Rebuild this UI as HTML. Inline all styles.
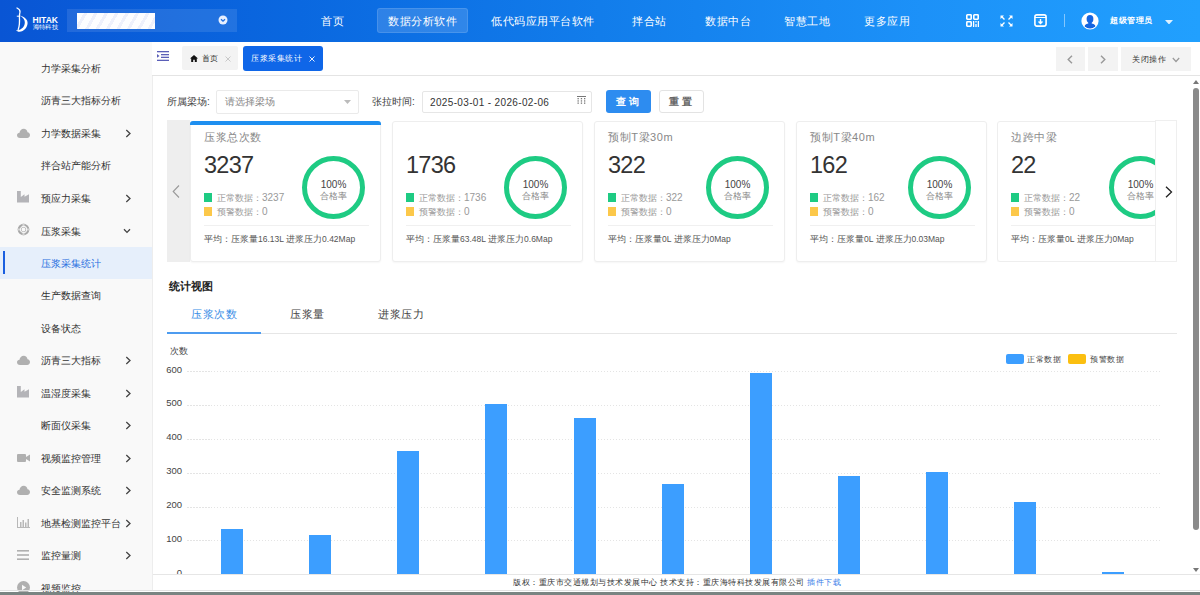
<!DOCTYPE html>
<html><head><meta charset="utf-8">
<style>
*{box-sizing:border-box;margin:0;padding:0}
html,body{width:1200px;height:595px;overflow:hidden;background:#fff;font-family:"Liberation Sans",sans-serif;color:#333}
div,span{position:absolute;white-space:nowrap}
#hdr{left:0;top:0;width:1200px;height:42px;background:linear-gradient(90deg,rgb(9,85,212) 0%,rgb(10,104,224) 25%,rgb(18,125,235) 50%,rgb(28,145,248) 76.7%,rgb(33,160,254) 100%)}
.nav{top:0;height:42px;line-height:42px;color:#fff;font-size:11px;letter-spacing:0.55px}
#side{left:0;top:42px;width:153px;height:548px;background:#f9f9f9;border-right:1px solid #ededed}
.si{left:0;width:152px;height:32px;line-height:32px;font-size:10px;color:#333}
.si .t{left:41px;top:1px}
.si .ar{left:124px;top:0}
.si svg{position:absolute;left:17px}
.si svg.chv{left:124.5px;top:11.5px}
#tabs{left:152px;top:42px;width:1048px;height:34px;background:#fff;border-bottom:1px solid #e4e4e4}
.card{top:121px;width:191px;height:141px;background:#fff;border:1px solid #eeeeee;border-radius:3px;box-shadow:0 1px 2px rgba(0,0,0,0.04)}
.ct{left:13px;top:8px;font-size:11px;letter-spacing:0.6px;color:#888}
.cn{left:13px;top:30px;font-size:23.5px;letter-spacing:-0.7px;color:#333}
.lg{left:13px;font-size:9px;color:#999}
.lg b{font-weight:normal;font-size:10px}
.lg i{display:inline-block;width:8px;height:9px;vertical-align:-1px;margin-right:5px}
.ring{left:111px;top:34px;width:63px;height:63px;border-radius:50%;border:5px solid #1ecb83}
.ring .p{left:0;width:53px;top:18px;text-align:center;font-size:10px;color:#444}
.ring .q{left:0;width:53px;top:30px;text-align:center;font-size:8.5px;color:#888}
.sep{left:13px;width:165px;top:103px;height:1px;background:#f0f0f0}
.avg{left:13px;top:112px;font-size:8.5px;color:#555}
.yl{left:150px;width:32px;text-align:right;font-size:9.5px;color:#444;line-height:10px}
.gl{left:187px;width:973px;height:1px;background:repeating-linear-gradient(90deg,#e4e4e4 0,#e4e4e4 1.5px,transparent 1.5px,transparent 3px)}
.bar{width:22px;background:#3c9eff}
</style></head><body>
<!-- HEADER -->
<div id="hdr">
  <svg style="position:absolute;left:14px;top:7px" width="48" height="27" viewBox="0 0 48 27">
    <path d="M3 1 C5 2 6.2 3.5 6 5 C5.8 6.5 5.2 8 5.4 10 M5.4 9.5 C5.7 14 5.6 19 4.2 22.5" fill="none" stroke="#fff" stroke-width="1.3" stroke-linecap="round"/>
    <path d="M2.8 9.2 H6.3" stroke="#fff" stroke-width="1"/>
    <path d="M5.8 8.5 C10.5 10 13.8 12.5 13.6 16 C13.4 20.5 10 24.5 5.5 24.8 C4 24.9 2.8 24 2.2 23 C4.5 23.5 7 22.5 9 20.5 C10.8 18.5 11.2 15.5 10.5 13.5 C9.5 11 7.5 9.5 5.8 8.5 Z" fill="#fff"/>
    <text x="18.5" y="15.6" font-family="Liberation Sans" font-weight="bold" font-size="8.6" fill="#fff" transform="scale(1,1)" textLength="25.5" lengthAdjust="spacingAndGlyphs">HITAK</text>
    <text x="18.5" y="21.8" font-size="5.5" fill="#fff" textLength="25.5" lengthAdjust="spacingAndGlyphs">海特科技</text>
  </svg>
  <div style="left:67px;top:9px;width:170px;height:23px;background:rgba(255,255,255,0.1)"></div>
  <div style="left:77px;top:13px;width:78px;height:16px;background:repeating-linear-gradient(120deg,#fdfdff 0,#fdfdff 6px,#eef0fb 6px,#eef0fb 9px)"></div>
  <svg style="position:absolute;left:218px;top:15px" width="10" height="10" viewBox="0 0 10 10"><circle cx="5" cy="5" r="4.5" fill="#e8f0ff"/><path d="M3 4.2 L5 6.2 L7 4.2" fill="none" stroke="#1f6fe0" stroke-width="1.3"/></svg>

  <div class="nav" style="left:321px">首页</div>
  <div style="left:377px;top:8px;width:91px;height:25px;border-radius:3px;background:rgba(255,255,255,0.14);border:1px solid rgba(255,255,255,0.12)"></div>
  <div class="nav" style="left:388px">数据分析软件</div>
  <div class="nav" style="left:491px">低代码应用平台软件</div>
  <div class="nav" style="left:632px">拌合站</div>
  <div class="nav" style="left:705px">数据中台</div>
  <div class="nav" style="left:784px">智慧工地</div>
  <div class="nav" style="left:864px">更多应用</div>

  <!-- qr -->
  <svg style="position:absolute;left:966px;top:14px" width="13" height="13" viewBox="0 0 13 13" fill="none" stroke="#fff" stroke-width="1.6">
    <rect x="0.8" y="0.8" width="4.4" height="4.4" rx="0.6"/><rect x="7.8" y="0.8" width="4.4" height="4.4" rx="0.6"/><rect x="0.8" y="7.8" width="4.4" height="4.4" rx="0.6"/>
    <path d="M7.6 7 V13 M12.4 7 V13 M10 7 V8.5 M10 10 V13" stroke-width="1.3"/>
  </svg>
  <!-- fullscreen -->
  <svg style="position:absolute;left:1000px;top:15px" width="13" height="12" viewBox="0 0 13 12" fill="#fff">
    <path d="M0.5 0.5 H4 L0.5 4 Z M12.5 0.5 H9 L12.5 4 Z M0.5 11.5 H4 L0.5 8 Z M12.5 11.5 H9 L12.5 8 Z"/>
    <path d="M1.5 1.5 L4.5 4.5 M11.5 1.5 L8.5 4.5 M1.5 10.5 L4.5 7.5 M11.5 10.5 L8.5 7.5" stroke="#fff" stroke-width="1.4"/>
  </svg>
  <!-- download -->
  <svg style="position:absolute;left:1034px;top:14px" width="13" height="13" viewBox="0 0 13 13" fill="none" stroke="#fff">
    <rect x="0.9" y="0.9" width="11.2" height="11.2" rx="2" stroke-width="1.6"/>
    <path d="M1 3.5 H12" stroke-width="1"/>
    <path d="M6.5 5 V9.5 M4.5 7.5 L6.5 9.5 L8.5 7.5" stroke-width="1.4"/>
  </svg>
  <div style="left:1064px;top:14px;width:1px;height:13px;background:rgba(255,255,255,0.45)"></div>
  <svg style="position:absolute;left:1081px;top:12px" width="18" height="18" viewBox="0 0 18 18">
    <circle cx="9" cy="9" r="8.6" fill="#fff"/>
    <clipPath id="avc"><circle cx="9" cy="9" r="7.6"/></clipPath>
    <g clip-path="url(#avc)" fill="#1565e0">
    <ellipse cx="9" cy="7" rx="3.4" ry="4"/>
    <path d="M7.3 10 H10.7 V11.6 C13.5 12 15 13.5 15 17 H3 C3 13.5 4.5 12 7.3 11.6Z"/>
    </g>
  </svg>
  <div style="left:1110px;top:14px;font-size:8px;letter-spacing:0.5px;line-height:14px;color:#fff;font-weight:bold">超级管理员</div>
  <svg style="position:absolute;left:1165px;top:19.5px" width="8" height="4.5" viewBox="0 0 8 4.5"><path d="M0 0 H8 L4 4.5Z" fill="#fff" opacity="0.85"/></svg>
</div>

<!-- SIDEBAR -->
<div id="side"></div>
<div id="sideitems" style="left:0;top:0;width:152px;height:595px">
  <div class="si" style="top:52px"><span class="t">力学采集分析</span></div>
  <div class="si" style="top:84px"><span class="t">沥青三大指标分析</span></div>
  <div class="si" style="top:117px"><svg style="top:11px" width="13" height="10" viewBox="0 0 13 10"><path d="M3 10 C1 10 0 8.8 0 7.3 C0 5.8 1.2 4.8 2.5 4.8 C2.7 2.5 4.5 0.8 6.7 0.8 C8.7 0.8 10.2 2.2 10.5 4.2 C12 4.4 13 5.6 13 7.1 C13 8.7 11.8 10 10.2 10Z" fill="#b0b0b0"/></svg><span class="t">力学数据采集</span><svg class="chv" width="7" height="9" viewBox="0 0 7 9"><path d="M1.3 1 L5 4.5 L1.3 8" fill="none" stroke="#444" stroke-width="1.3"/></svg></div>
  <div class="si" style="top:149px"><span class="t">拌合站产能分析</span></div>
  <div class="si" style="top:182px"><svg style="top:9px" width="13" height="12" viewBox="0 0 13 12"><path d="M0 0 H3.8 V6 L7.5 3.2 V5.8 L12 3.2 V11.6 H0Z" fill="#b4b4b8"/></svg><span class="t">预应力采集</span><svg class="chv" width="7" height="9" viewBox="0 0 7 9"><path d="M1.3 1 L5 4.5 L1.3 8" fill="none" stroke="#444" stroke-width="1.3"/></svg></div>
  <div class="si" style="top:215px"><svg style="top:8px" width="13" height="13" viewBox="0 0 13 13"><circle cx="6.5" cy="6.5" r="5.8" fill="#a8a8a8"/><path d="M6.5 0.5 V3.8 M6.5 9.2 V12.5 M0.5 6.5 H3.8 M9.2 6.5 H12.5" stroke="#d4d4d4" stroke-width="2.2"/><circle cx="6.5" cy="6.5" r="3.1" fill="none" stroke="#f4f4f4" stroke-width="1.2"/><circle cx="6.5" cy="6.5" r="1.9" fill="#f9f9f9"/></svg><span class="t">压浆采集</span><svg class="chv" style="left:123px;top:13px" width="8" height="6" viewBox="0 0 8 6"><path d="M1 1.2 L4 4.4 L7 1.2" fill="none" stroke="#444" stroke-width="1.3"/></svg></div>
  <div style="left:0;top:247px;width:152px;height:32px;background:#e6effb"></div>
  <div style="left:3px;top:251px;width:2px;height:23px;background:#1a5fe0"></div>
  <div class="si" style="top:247px;color:#2a6fe0"><span class="t">压浆采集统计</span></div>
  <div class="si" style="top:279px"><span class="t">生产数据查询</span></div>
  <div class="si" style="top:312px"><span class="t">设备状态</span></div>
  <div class="si" style="top:344px"><svg style="top:11px" width="13" height="10" viewBox="0 0 13 10"><path d="M3 10 C1 10 0 8.8 0 7.3 C0 5.8 1.2 4.8 2.5 4.8 C2.7 2.5 4.5 0.8 6.7 0.8 C8.7 0.8 10.2 2.2 10.5 4.2 C12 4.4 13 5.6 13 7.1 C13 8.7 11.8 10 10.2 10Z" fill="#b0b0b0"/></svg><span class="t">沥青三大指标</span><svg class="chv" width="7" height="9" viewBox="0 0 7 9"><path d="M1.3 1 L5 4.5 L1.3 8" fill="none" stroke="#444" stroke-width="1.3"/></svg></div>
  <div class="si" style="top:377px"><svg style="top:9px" width="13" height="12" viewBox="0 0 13 12"><path d="M0 0 H3.8 V6 L7.5 3.2 V5.8 L12 3.2 V11.6 H0Z" fill="#b4b4b8"/></svg><span class="t">温湿度采集</span><svg class="chv" width="7" height="9" viewBox="0 0 7 9"><path d="M1.3 1 L5 4.5 L1.3 8" fill="none" stroke="#444" stroke-width="1.3"/></svg></div>
  <div class="si" style="top:409px"><span class="t">断面仪采集</span><svg class="chv" width="7" height="9" viewBox="0 0 7 9"><path d="M1.3 1 L5 4.5 L1.3 8" fill="none" stroke="#444" stroke-width="1.3"/></svg></div>
  <div class="si" style="top:442px"><svg style="top:11px" width="13" height="10" viewBox="0 0 13 10"><rect x="0" y="1" width="9" height="8" rx="1" fill="#b0b0b0"/><path d="M9 4 L13 1.5 V8.5 L9 6Z" fill="#b0b0b0"/></svg><span class="t">视频监控管理</span><svg class="chv" width="7" height="9" viewBox="0 0 7 9"><path d="M1.3 1 L5 4.5 L1.3 8" fill="none" stroke="#444" stroke-width="1.3"/></svg></div>
  <div class="si" style="top:474px"><svg style="top:11px" width="13" height="10" viewBox="0 0 13 10"><path d="M3 10 C1 10 0 8.8 0 7.3 C0 5.8 1.2 4.8 2.5 4.8 C2.7 2.5 4.5 0.8 6.7 0.8 C8.7 0.8 10.2 2.2 10.5 4.2 C12 4.4 13 5.6 13 7.1 C13 8.7 11.8 10 10.2 10Z" fill="#b0b0b0"/></svg><span class="t">安全监测系统</span><svg class="chv" width="7" height="9" viewBox="0 0 7 9"><path d="M1.3 1 L5 4.5 L1.3 8" fill="none" stroke="#444" stroke-width="1.3"/></svg></div>
  <div class="si" style="top:507px"><svg style="top:10px" width="13" height="11" viewBox="0 0 13 11" fill="#b8b8b8"><rect x="0" y="0" width="1" height="11"/><rect x="0" y="10" width="13" height="1"/><rect x="3" y="5" width="1.5" height="5"/><rect x="5.5" y="3" width="1.5" height="7"/><rect x="8" y="5.5" width="1.5" height="4.5"/><rect x="10.5" y="2" width="1.5" height="8"/></svg><span class="t">地基检测监控平台</span><svg class="chv" width="7" height="9" viewBox="0 0 7 9"><path d="M1.3 1 L5 4.5 L1.3 8" fill="none" stroke="#444" stroke-width="1.3"/></svg></div>
  <div class="si" style="top:539px"><svg style="top:11px" width="12" height="10" viewBox="0 0 12 10" fill="#b0b0b0"><rect x="0" y="0" width="12" height="1.6"/><rect x="0" y="4.2" width="12" height="1.6"/><rect x="0" y="8.4" width="12" height="1.6"/></svg><span class="t">监控量测</span><svg class="chv" width="7" height="9" viewBox="0 0 7 9"><path d="M1.3 1 L5 4.5 L1.3 8" fill="none" stroke="#444" stroke-width="1.3"/></svg></div>
  <div class="si" style="top:572px"><svg style="top:9px" width="13" height="13" viewBox="0 0 13 13"><circle cx="6.5" cy="6.5" r="6.5" fill="#b0b0b0"/><path d="M5 3.8 L9.2 6.5 L5 9.2Z" fill="#f9f9f9"/></svg><span class="t">视频监控</span></div>
</div>

<!-- TABS BAR -->
<div id="tabs"></div>
<svg style="position:absolute;left:157px;top:51px" width="12" height="10" viewBox="0 0 12 10" fill="#5b5fb8">
  <rect x="0" y="0" width="12" height="1.3"/><rect x="4" y="3" width="8" height="1.3"/><rect x="4" y="5.7" width="8" height="1.3"/><rect x="0" y="8.7" width="12" height="1.3"/><path d="M0 3 L2.5 4.9 L0 6.8Z"/>
</svg>
<div style="left:182px;top:46px;width:56px;height:24px;background:#f3f3f3;border-radius:2px"></div>
<svg style="position:absolute;left:190px;top:55px" width="8" height="7" viewBox="0 0 8 7"><path d="M4 0 L8 3.6 H6.8 V7 H4.8 V4.8 H3.2 V7 H1.2 V3.6 H0Z" fill="#111"/></svg>
<div style="left:202px;top:52px;font-size:8px;letter-spacing:0.3px;line-height:13px;color:#333">首页</div>
<svg style="position:absolute;left:225px;top:56px" width="6" height="6" viewBox="0 0 6 6"><path d="M0.5 0.5 L5.5 5.5 M5.5 0.5 L0.5 5.5" stroke="#c8c8c8" stroke-width="1"/></svg>
<div style="left:243px;top:46px;width:80px;height:25px;background:#0f66e8;border-radius:3px"></div>
<div style="left:251px;top:52px;font-size:8px;letter-spacing:0.5px;line-height:13px;color:#fff">压浆采集统计</div>
<svg style="position:absolute;left:309px;top:56px" width="6" height="6" viewBox="0 0 6 6"><path d="M0.5 0.5 L5.5 5.5 M5.5 0.5 L0.5 5.5" stroke="#fff" stroke-width="0.9"/></svg>

<div style="left:1056px;top:47px;width:29px;height:24px;background:#f3f3f3"></div>
<div style="left:1088px;top:47px;width:30px;height:24px;background:#f3f3f3"></div>
<div style="left:1121px;top:47px;width:70px;height:24px;background:#f3f3f3"></div>
<svg style="position:absolute;left:1067px;top:55px" width="6" height="9" viewBox="0 0 6 9"><path d="M5 0.8 L1.2 4.5 L5 8.2" fill="none" stroke="#999" stroke-width="1.4"/></svg>
<svg style="position:absolute;left:1100px;top:55px" width="6" height="9" viewBox="0 0 6 9"><path d="M1 0.8 L4.8 4.5 L1 8.2" fill="none" stroke="#999" stroke-width="1.4"/></svg>
<div style="left:1132px;top:53px;font-size:8px;letter-spacing:0.6px;line-height:13px;color:#333">关闭操作</div>
<svg style="position:absolute;left:1172px;top:57px" width="8" height="6" viewBox="0 0 8 6"><path d="M0.8 1 L4 4.5 L7.2 1" fill="none" stroke="#999" stroke-width="1.2"/></svg>

<!-- MAIN CONTENT -->
<!-- filters -->
<div style="left:167px;top:95px;font-size:10px;line-height:14px;color:#444">所属梁场:</div>
<div style="left:216px;top:90px;width:143px;height:24px;border:1px solid #eaeaea;border-radius:2px"></div>
<div style="left:225px;top:95px;font-size:10px;line-height:14px;color:#888">请选择梁场</div>
<svg style="position:absolute;left:344px;top:100px" width="7" height="4" viewBox="0 0 7 4"><path d="M0 0 H7 L3.5 4Z" fill="#bbb"/></svg>
<div style="left:372px;top:95px;font-size:10px;line-height:14px;color:#444">张拉时间:</div>
<div style="left:422px;top:91px;width:170px;height:22px;border:1px solid #e6e6e6;border-radius:2px"></div>
<div style="left:430px;top:95.5px;font-size:10px;letter-spacing:0.35px;line-height:14px;color:#333">2025-03-01 - 2026-02-06</div>
<svg style="position:absolute;left:577px;top:96px" width="9" height="8" viewBox="0 0 9 8" fill="#777"><rect x="0" y="0" width="9" height="1"/><rect x="0.5" y="2" width="1.3" height="1.3"/><rect x="3.8" y="2" width="1.3" height="1.3"/><rect x="7" y="2" width="1.3" height="1.3"/><rect x="0.5" y="4.3" width="1.3" height="1.3"/><rect x="3.8" y="4.3" width="1.3" height="1.3"/><rect x="7" y="4.3" width="1.3" height="1.3"/><rect x="0.5" y="6.5" width="1.3" height="1.3"/><rect x="3.8" y="6.5" width="1.3" height="1.3"/><rect x="7" y="6.5" width="1.3" height="1.3"/></svg>
<div style="left:606px;top:90px;width:45px;height:23px;background:#2d8cf0;border-radius:3px"></div>
<div style="left:616px;top:95px;font-size:10px;line-height:14px;color:#fff;font-weight:bold;letter-spacing:3px">查询</div>
<div style="left:659px;top:90px;width:45px;height:23px;border:1px solid #e3e3e3;border-radius:3px;background:#fff"></div>
<div style="left:669px;top:95px;font-size:10px;line-height:14px;color:#666;font-weight:bold;letter-spacing:3px">重置</div>

<!-- cards -->
<div style="left:167px;top:120px;width:23px;height:142px;background:#eeeeee"></div>
<svg style="position:absolute;left:172px;top:185px" width="8" height="13" viewBox="0 0 8 13"><path d="M7 0.5 L1.2 6.5 L7 12.5" fill="none" stroke="#999" stroke-width="1.1"/></svg>

<div class="card" style="left:190px">
  <div style="left:-1px;top:-1px;width:191px;height:4px;background:#1e8ff0;border-radius:3px 3px 0 0"></div>
  <div class="ct">压浆总次数</div>
  <div class="cn">3237</div>
  <div class="lg" style="top:70px"><i style="background:#1ecb83"></i>正常数据：<b>3237</b></div>
  <div class="lg" style="top:84px"><i style="background:#fcc84a"></i>预警数据：<b>0</b></div>
  <div class="ring"><div class="p">100%</div><div class="q">合格率</div></div>
  <div class="sep"></div>
  <div class="avg">平均：压浆量16.13L 进浆压力0.42Map</div>
</div>
<div class="card" style="left:392px">
  <div class="ct"></div>
  <div class="cn">1736</div>
  <div class="lg" style="top:70px"><i style="background:#1ecb83"></i>正常数据：<b>1736</b></div>
  <div class="lg" style="top:84px"><i style="background:#fcc84a"></i>预警数据：<b>0</b></div>
  <div class="ring"><div class="p">100%</div><div class="q">合格率</div></div>
  <div class="sep"></div>
  <div class="avg">平均：压浆量63.48L 进浆压力0.6Map</div>
</div>
<div class="card" style="left:594px">
  <div class="ct">预制T梁30m</div>
  <div class="cn">322</div>
  <div class="lg" style="top:70px"><i style="background:#1ecb83"></i>正常数据：<b>322</b></div>
  <div class="lg" style="top:84px"><i style="background:#fcc84a"></i>预警数据：<b>0</b></div>
  <div class="ring"><div class="p">100%</div><div class="q">合格率</div></div>
  <div class="sep"></div>
  <div class="avg">平均：压浆量0L 进浆压力0Map</div>
</div>
<div class="card" style="left:796px">
  <div class="ct">预制T梁40m</div>
  <div class="cn">162</div>
  <div class="lg" style="top:70px"><i style="background:#1ecb83"></i>正常数据：<b>162</b></div>
  <div class="lg" style="top:84px"><i style="background:#fcc84a"></i>预警数据：<b>0</b></div>
  <div class="ring"><div class="p">100%</div><div class="q">合格率</div></div>
  <div class="sep"></div>
  <div class="avg">平均：压浆量0L 进浆压力0.03Map</div>
</div>
<div style="left:997px;top:121px;width:180px;height:141px;overflow:hidden"><div class="card" style="left:0;top:0">
  <div class="ct">边跨中梁</div>
  <div class="cn">22</div>
  <div class="lg" style="top:70px"><i style="background:#1ecb83"></i>正常数据：<b>22</b></div>
  <div class="lg" style="top:84px"><i style="background:#fcc84a"></i>预警数据：<b>0</b></div>
  <div class="ring"><div class="p">100%</div><div class="q">合格率</div></div>
  <div class="sep"></div>
  <div class="avg">平均：压浆量0L 进浆压力0Map</div>
</div></div>
<div style="left:1155px;top:120px;width:22px;height:142px;background:#fff;border:1px solid #efefef"></div>
<svg style="position:absolute;left:1165px;top:186px" width="8" height="12" viewBox="0 0 8 12"><path d="M1 0.8 L6.5 6 L1 11.2" fill="none" stroke="#222" stroke-width="1.3"/></svg>

<!-- stats -->
<div style="left:169px;top:279px;font-size:11px;line-height:15px;color:#222;font-weight:bold">统计视图</div>
<div style="left:191px;top:306px;font-size:11px;letter-spacing:0.5px;line-height:16px;color:#3a8ee6">压浆次数</div>
<div style="left:290px;top:306px;font-size:11px;letter-spacing:0.5px;line-height:16px;color:#444">压浆量</div>
<div style="left:378px;top:306px;font-size:11px;letter-spacing:0.5px;line-height:16px;color:#444">进浆压力</div>
<div style="left:167px;top:333px;width:1010px;height:1px;background:#e6e6e6"></div>
<div style="left:167px;top:332px;width:94px;height:2px;background:#4d9cf0"></div>

<!-- chart -->
<div style="left:170px;top:346px;font-size:9px;line-height:11px;color:#444">次数</div>
<div class="gl" style="top:371px"></div>
<div class="gl" style="top:405px"></div>
<div class="gl" style="top:439px"></div>
<div class="gl" style="top:473px"></div>
<div class="gl" style="top:507px"></div>
<div class="gl" style="top:540px"></div>
<div class="yl" style="top:365px">600</div>
<div class="yl" style="top:398px">500</div>
<div class="yl" style="top:432px">400</div>
<div class="yl" style="top:466px">300</div>
<div class="yl" style="top:500px">200</div>
<div class="yl" style="top:534px">100</div>
<div class="yl" style="top:568px">0</div>

<div class="bar" style="left:221px;top:529px;height:45px"></div>
<div class="bar" style="left:309px;top:535px;height:39px"></div>
<div class="bar" style="left:397px;top:451px;height:123px"></div>
<div class="bar" style="left:485px;top:404px;height:170px"></div>
<div class="bar" style="left:574px;top:418px;height:156px"></div>
<div class="bar" style="left:662px;top:484px;height:90px"></div>
<div class="bar" style="left:750px;top:373px;height:201px"></div>
<div class="bar" style="left:838px;top:476px;height:98px"></div>
<div class="bar" style="left:926px;top:472px;height:102px"></div>
<div class="bar" style="left:1014px;top:502px;height:72px"></div>
<div class="bar" style="left:1102px;top:572px;height:2px"></div>

<div style="left:1006px;top:354px;width:18px;height:10px;border-radius:2px;background:#3c9eff"></div>
<div style="left:1027px;top:354px;font-size:8px;letter-spacing:0.5px;line-height:11px;color:#444">正常数据</div>
<div style="left:1068px;top:354px;width:18px;height:10px;border-radius:2px;background:#fbbf10"></div>
<div style="left:1090px;top:354px;font-size:8px;letter-spacing:0.5px;line-height:11px;color:#444">预警数据</div>

<!-- footer -->
<div style="left:153px;top:574px;width:1047px;height:16px;background:#fff;border-top:1px solid #e6e6e6"></div>
<div style="left:513px;top:577px;font-size:8px;letter-spacing:0.5px;line-height:12px;color:#333">版权：重庆市交通规划与技术发展中心 技术支持：重庆海特科技发展有限公司 <span style="position:static;color:#3a7ee8">插件下载</span></div>
<div style="left:0;top:590px;width:1200px;height:1px;background:#e2e2e2"></div><div style="left:0;top:592px;width:1200px;height:3px;background:#7a8482"></div>

<!-- scrollbar -->
<svg style="position:absolute;left:1193px;top:80px" width="6" height="4" viewBox="0 0 6 4"><path d="M0 4 L3 0 L6 4Z" fill="#777"/></svg>
<div style="left:1193px;top:88px;width:6px;height:442px;background:#8a8a8a;border-radius:3px"></div>
<svg style="position:absolute;left:1193px;top:568px" width="6" height="4" viewBox="0 0 6 4"><path d="M0 0 L6 0 L3 4Z" fill="#777"/></svg>
</body></html>
